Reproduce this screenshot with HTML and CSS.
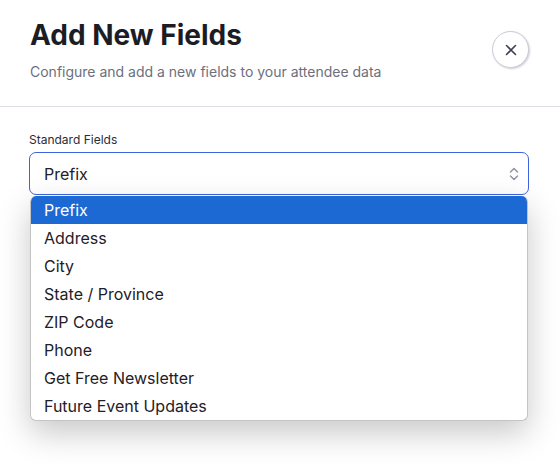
FILE: index.html
```html
<!DOCTYPE html>
<html>
<head>
<meta charset="utf-8">
<link rel="stylesheet" href="styles.css">
</head>
<body>
<div class="modal">
  <div class="header">
    <div class="titles">
      <h1 class="title">Add New Fields</h1>
      <p class="subtitle">Configure and add a new fields to your attendee data</p>
    </div>
    <button class="close" aria-label="Close">
      <svg width="12" height="12" viewBox="0 0 12 12"><path d="M1.5 1.5 L10.5 10.5 M10.5 1.5 L1.5 10.5" stroke="#3f4152" stroke-width="1.6" stroke-linecap="round"/></svg>
    </button>
  </div>
  <div class="body">
    <label class="label">Standard Fields</label>
    <div class="field">
      <div class="select">
        <span>Prefix</span>
        <svg class="chev" width="10" height="16" viewBox="0 0 10 16"><path d="M1.5 6 L5 2.5 L8.5 6 M1.5 10 L5 13.5 L8.5 10" fill="none" stroke="#8a8fa0" stroke-width="1.4" stroke-linecap="round" stroke-linejoin="round"/></svg>
      </div>
      <ul class="menu">
        <li class="item active">Prefix</li>
        <li class="item">Address</li>
        <li class="item">City</li>
        <li class="item">State / Province</li>
        <li class="item">ZIP Code</li>
        <li class="item">Phone</li>
        <li class="item">Get Free Newsletter</li>
        <li class="item">Future Event Updates</li>
      </ul>
    </div>
  </div>
</div>
</body>
</html>
```
FILE: styles.css
```css
* { box-sizing: border-box; }
html, body { margin: 0; padding: 0; background: #fff; }
body { font-family: Inter, "Noto Sans", sans-serif; color: #1f2028; }
.modal { width: 560px; height: 470px; }
.header {
  display: flex;
  justify-content: space-between;
  align-items: flex-start;
  padding: 17px 31px 25px 30px;
  border-bottom: 1px solid #dcdfe8;
}
.title {
  margin: 0;
  font-size: 28px;
  line-height: 36px;
  font-weight: 700;
  color: #1c1d24;
}
.subtitle {
  margin: 10px 0 0 0;
  font-size: 14px;
  line-height: 18px;
  color: #6b6f7e;
}
.close {
  margin-top: 14px;
  width: 37px;
  height: 37px;
  border-radius: 50%;
  border: 1px solid #c9ccd6;
  background: #fff;
  box-shadow: 1px 1px 2px rgba(60,64,80,0.25);
  display: flex;
  align-items: center;
  justify-content: center;
  padding: 0;
}
.body { padding: 25px 31px 0 29px; }
.label {
  display: block;
  font-size: 12px;
  line-height: 15px;
  color: #2a2c36;
  margin-bottom: 5px;
}
.field { position: relative; }
.select {
  height: 43px;
  border: 1px solid #3d63e0;
  border-radius: 7px;
  display: flex;
  align-items: center;
  justify-content: space-between;
  padding: 0 9px 0 14px;
  font-size: 16px;
  color: #1f2028;
  background: #fff;
}
.chev { display: block; }
.menu {
  position: absolute;
  left: 1px;
  right: 1px;
  top: 44px;
  margin: 0;
  padding: 0;
  list-style: none;
  background: #fff;
  border-radius: 6px;
  overflow: hidden;
  border: 1px solid #c4c4c4;
  border-top: none;
  box-shadow: 0 12px 32px rgba(0,0,0,0.22);
}
.item {
  height: 28px;
  line-height: 28px;
  padding-left: 13px;
  font-size: 16px;
  color: #1f2028;
}
.item.active { background: #1c69d4; color: #fff; }
```
